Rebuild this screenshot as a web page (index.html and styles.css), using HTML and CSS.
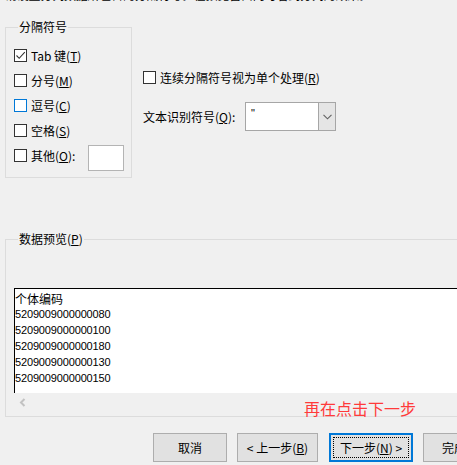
FILE: index.html
```html
<!DOCTYPE html>
<html lang="zh-CN">
<head>
    <meta charset="UTF-8">
    <title>文本分列向导</title>
    <link rel="stylesheet" href="styles.css">
</head>
<body>
    <div class="wizard">
        <!-- cut-off instruction line -->
        <div class="intro"><span>请设置分列数据所包含的分隔符号。在预览窗口内可看到分列的效果。</span></div>

        <div class="options">
            <fieldset class="group delimiters">
                <legend>分隔符号</legend>
                <div class="check-row">
                    <span class="box checked">
                        <svg width="11" height="11" viewBox="0 0 11 11"><path d="M1.5 5.5 L4.2 8.3 L9.8 2.2" fill="none" stroke="#333" stroke-width="1.1"/></svg>
                    </span>
                    <span>Tab 键(<u>T</u>)</span>
                </div>
                <div class="check-row">
                    <span class="box"></span>
                    <span>分号(<u>M</u>)</span>
                </div>
                <div class="check-row">
                    <span class="box hover"></span>
                    <span>逗号(<u>C</u>)</span>
                </div>
                <div class="check-row">
                    <span class="box"></span>
                    <span>空格(<u>S</u>)</span>
                </div>
                <div class="check-row other">
                    <span class="box"></span>
                    <span>其他(<u>O</u>):</span>
                    <span class="other-input"></span>
                </div>
            </fieldset>

            <div class="side">
                <div class="check-row">
                    <span class="box"></span>
                    <span>连续分隔符号视为单个处理(<u>R</u>)</span>
                </div>
                <div class="qualifier">
                    <span class="qualifier-label">文本识别符号(<u>Q</u>):</span>
                    <div class="combo">
                        <span class="combo-value">"</span>
                        <span class="combo-button">
                            <svg width="9" height="6" viewBox="0 0 9 6"><path d="M0.5 0.8 L4.5 4.8 L8.5 0.8" fill="none" stroke="#606060" stroke-width="1.1"/></svg>
                        </span>
                    </div>
                </div>
            </div>
        </div>

        <fieldset class="group preview-group">
            <legend>数据预览(<u>P</u>)</legend>
            <div class="preview">
                <div class="preview-head">个体编码</div>
                <div class="preview-line">5209009000000080</div>
                <div class="preview-line">5209009000000100</div>
                <div class="preview-line">5209009000000180</div>
                <div class="preview-line">5209009000000130</div>
                <div class="preview-line">5209009000000150</div>
            </div>
            <div class="hscroll">
                <svg width="8" height="9" viewBox="0 0 8 9"><path d="M5.5 1 L2 4.5 L5.5 8" fill="none" stroke="#c2c2c2" stroke-width="2"/></svg>
            </div>
        </fieldset>

        <div class="note">再在点击下一步</div>

        <div class="buttons">
            <button class="btn btn-cancel">取消</button>
            <button class="btn btn-back">&lt; 上一步(<u>B</u>)</button>
            <button class="btn btn-next"><span class="focus">下一步(<u>N</u>) &gt;</span></button>
            <button class="btn btn-finish">完成</button>
        </div>
    </div>
</body>
</html>
```

FILE: styles.css
```css
body {
    margin: 0;
    background-color: #f0f0f0;
    font-family: "Noto Sans CJK SC", "Liberation Sans", sans-serif;
    font-size: 12px;
    color: #000;
    overflow: hidden;
}
u {
    text-decoration-thickness: 1px;
    text-underline-offset: 1px;
}
.wizard {
    position: relative;
    width: 457px;
    height: 465px;
    overflow: hidden;
}
.intro {
    height: 4px;
    overflow: hidden;
    padding-left: 5px;
    white-space: nowrap;
}
.intro span {
    display: block;
    line-height: 14px;
    margin-top: -12px;
    letter-spacing: -0.2px;
}
.options {
    display: flex;
    margin-top: 16px;
}
.group {
    margin: 0 0 0 5px;
    border: 1px solid #dcdcdc;
    padding: 0;
}
.group legend {
    padding: 0 1px;
    margin-left: 4px;
    line-height: 14px;
}
.delimiters {
    width: 127px;
    height: 158px;
    box-sizing: border-box;
    padding: 9px 0 0 8px;
}
.check-row {
    display: flex;
    align-items: center;
    height: 25px;
    white-space: nowrap;
}
.box {
    width: 13px;
    height: 13px;
    box-sizing: border-box;
    border: 1px solid #333;
    background: #fff;
    margin-right: 4px;
    display: flex;
    align-items: center;
    justify-content: center;
}
.box.hover {
    border-color: #0078d7;
}
.other {
    align-items: flex-start;
}
.other .box {
    margin-top: 6px;
}
.other span:nth-child(2) {
    line-height: 25px;
}
.other-input {
    width: 36px;
    height: 26px;
    box-sizing: border-box;
    border: 1px solid #b4b4b4;
    background: #fff;
    margin: 2px 0 0 13px;
}
.side {
    margin-left: 11px;
    padding-top: 45px;
}
.qualifier {
    display: flex;
    align-items: center;
    margin-top: 12px;
}
.qualifier-label {
    width: 102px;
    white-space: nowrap;
}
.combo {
    display: flex;
    width: 91px;
    height: 29px;
    box-sizing: border-box;
    border: 1px solid #a6a6a6;
    background: #fff;
}
.combo-value {
    flex: 1;
    padding: 4px 0 0 5px;
    font-family: "Liberation Sans", sans-serif;
    font-size: 11px;
}
.combo-button {
    width: 16px;
    background: #e5e5e5;
    border-left: 1px solid #a6a6a6;
    display: flex;
    align-items: center;
    justify-content: center;
}
.preview-group {
    width: 470px;
    height: 185px;
    box-sizing: border-box;
    margin-top: 54px;
    padding: 42px 0 0 8px;
}
.preview {
    height: 104px;
    background: #fff;
    border-top: 1px solid #000;
    border-left: 1px solid #000;
    overflow: hidden;
    font-family: "Liberation Sans", sans-serif;
    font-size: 11px;
}
.preview-head {
    height: 17px;
    line-height: 19px;
    font-family: "Noto Sans CJK SC", sans-serif;
    font-size: 12px;
}
.preview-line {
    height: 16px;
    line-height: 16px;
    letter-spacing: -0.15px;
}
.hscroll {
    height: 18px;
    display: flex;
    align-items: center;
    padding-left: 5px;
}
.note {
    position: absolute;
    left: 304px;
    top: 397px;
    font-size: 16px;
    line-height: 22px;
    color: #ff3a3a;
}
.buttons {
    display: flex;
    gap: 10px;
    margin: 16px 0 0 153px;
}
.btn {
    height: 29px;
    box-sizing: border-box;
    border: 1px solid #adadad;
    background: #e1e1e1;
    font-family: "Noto Sans CJK SC", "Liberation Sans", sans-serif;
    font-size: 12px;
    color: #000;
    padding: 0;
    flex-shrink: 0;
}
.btn-cancel {
    width: 74px;
}
.btn-back {
    width: 81px;
}
.btn-next {
    width: 84px;
    margin-left: 1px;
    border: 2px solid #0078d7;
    padding: 2px;
}
.btn-next .focus {
    display: flex;
    align-items: center;
    justify-content: center;
    height: 100%;
    border: 1px dotted #000;
    box-sizing: border-box;
}
.btn-finish {
    width: 74px;
    text-align: left;
    padding-left: 18px;
}
```
